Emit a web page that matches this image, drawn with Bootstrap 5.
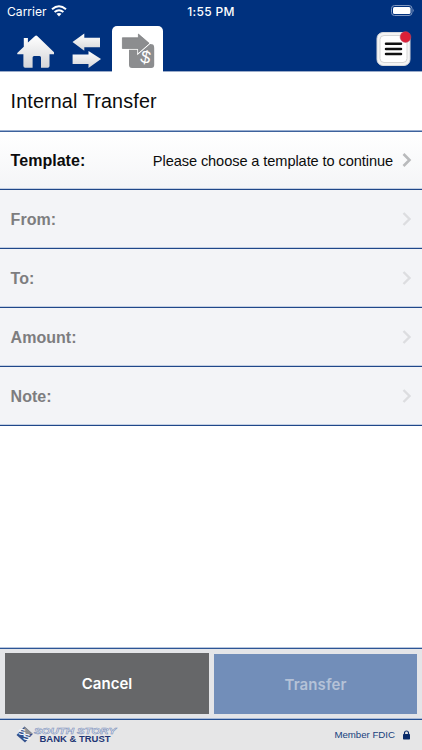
<!DOCTYPE html>
<html lang="en">
<head>
<meta charset="utf-8">
<meta name="viewport" content="width=device-width, initial-scale=1">
<title>Internal Transfer</title>
<link href="https://cdn.jsdelivr.net/npm/bootstrap@5.3.0/dist/css/bootstrap.min.css" rel="stylesheet">
<style>
body{font-family:"Liberation Sans",Arial,sans-serif;color:#0c0c0c;height:750px;line-height:1.2}
svg{display:block;flex:none}
.top-bar{background:linear-gradient(#00317e 71px,#9aabc9 71px);height:72px}
.status{height:22px;font:400 12.1px/22px Inter,sans-serif;padding:1px 7px 0;color:#fff}
.status>div{flex:1 1 0}
.status .clock{font-weight:500;font-size:12px;letter-spacing:.3px;flex:none}
.tools{height:50px;padding:4px 11px 0 16px}
.tab-on{width:51px;height:46px;background:#fff;border-radius:5px 5px 0 0;margin-left:11px;padding:6px 0 0 9px}
.screen-title{height:60px;font-size:19.7px;letter-spacing:.17px;padding:0 10.5px;margin:0;font-weight:400;border-bottom:1px solid #3d629c;box-shadow:inset 0 -1px #9aafd0}
.field{height:59px;border:0;border-bottom:1px solid #1f4789!important;box-shadow:inset 0 -1px #c3cfe3;border-radius:0!important;background:#f3f4f7;color:#7d7d7f;padding:1px 10px 0 10.6px}
.field:first-child{background:linear-gradient(#fff,#f4f5f7);color:#0c0c0c;height:58px}
.field b{font-size:16px;letter-spacing:.03px}
.field .hint{font-size:14.6px;letter-spacing:-.09px;padding-top:1px;margin-right:9px}
.field svg{margin-top:-2px}
.actions{height:71px;background:#e4e5e8;border-top:1px solid #2c5595;box-shadow:0 -1px #b9c7de;padding:4px 5px 5px;gap:5px}
.actions .btn{border-radius:0;border:0;font:600 15px Inter,sans-serif;padding:0;color:#fff;opacity:1}
.btn-stop{background:#666769!important;flex:0 0 204px}
.btn-send{background:#728eb9!important;color:#b5c2d7!important;margin-top:1px;flex:0 0 203px}
.actions .btn-send{letter-spacing:.1px}
.foot{height:31px;background:#e6e6e7;border-top:1px solid #234e91;box-shadow:0 -1px #a9bad7;padding:0 12px 1px 16px;color:#173f7d;font-size:10px}
.foot span{letter-spacing:-.02px;font:9.7px "Liberation Sans",sans-serif}
</style>
<script src="https://cdn.jsdelivr.net/npm/bootstrap@5.3.0/dist/js/bootstrap.bundle.min.js"></script>
</head>
<body class="d-flex flex-column overflow-hidden bg-white">
<header class="top-bar flex-shrink-0">
  <div class="status d-flex">
    <div class="d-flex align-items-center gap-1">Carrier
      <svg width="16" height="12" viewBox="0 0 16 12" fill="none" stroke="#fff" stroke-width="2" style="margin-top:-2px"><path d="M1 4.3Q8-1.8 15 4.3M3.6 7Q8 3.4 12.4 7"/><path d="M5.5 8.8Q8 7 10.5 8.8L8 11.5z" fill="#fff" stroke="none"/></svg>
    </div>
    <div class="clock">1:55 PM</div>
    <div class="d-flex justify-content-end align-items-center">
      <svg width="24" height="11" viewBox="0 0 24 11" style="margin-top:-2px"><rect x=".5" y=".5" width="20.5" height="10" rx="3" fill="none" stroke="#8299c1"/><rect x="2" y="2" width="17.5" height="7" rx="1.5" fill="#fff"/><path d="M22.2 3.8q1.5 1.7 0 3.4z" fill="#8299c1"/></svg>
    </div>
  </div>
  <div class="tools d-flex align-items-start">
    <svg class="mt-2" width="38" height="35" viewBox="0 0 38 35"><defs><linearGradient id="silver" x2="0" y2="1"><stop stop-color="#fff"/><stop offset="1" stop-color="#d4d5d8"/></linearGradient></defs><path d="M7.8 4h4.1v4.6l6.9-6.4q1.3-1.2 2.7 0l17 16.6q.9 1.4-.7 1.5h-4.3V32q0 1.7-1.7 1.7H25V23.5q0-1.5-1.5-1.5h-5.4q-1.5 0-1.5 1.5v10.2H9.1q-1.7 0-1.7-1.7V20.3H2.2q-1.6-.1-.7-1.5l6.3-6z" fill="url(#silver)"/></svg>
    <svg width="29" height="36" viewBox="0 0 29 36" style="margin:7px 0 0 18px"><g fill="url(#silver)"><path d="M.5 9 12.3.5v4.3H28v9.5H12.3v3.5z"/><path d="M29 26 16.5 35v-4H.6v-9.5h15.9V18z"/></g></svg>
    <div class="tab-on">
      <svg width="34" height="37" viewBox="0 0 34 37"><path d="M8 17h8l11-5.2q5 .2 5.5 1.2.7 1 .7 3V33q0 3-3 3H11q-3 0-3-3z" fill="#8c8d8f"/><path d="M1.4 5.7h16V2l10.7 9.2-10.7 9.3v-4h-16z" fill="none" stroke="#fff" stroke-width="2.4"/><path d="M1.4 5.7h16V2l10.7 9.2-10.7 9.3v-4h-16z" fill="#8c8d8f" stroke="#6f7072" stroke-width=".6"/><text x="19.7" y="31.3" font-family="Liberation Sans" font-size="18" fill="#fff" transform="rotate(12 25 25)">$</text></svg>
    </div>
    <svg class="ms-auto" style="margin-top:3px;margin-right:-1px" width="37" height="38" viewBox="0 0 37 38"><rect x="2" y="3.5" width="33" height="33" rx="6" fill="#f4f4f4" stroke="#d6d8dc"/><rect x="5" y="6.5" width="27" height="27" rx="4" fill="#fff" stroke="#d5d5d5"/><path d="M11 14.7h15M11 19.9h15M11 25.1h15" stroke="#111" stroke-width="2.5" stroke-linecap="round"/><circle cx="30.5" cy="8" r="5.4" fill="#dc2037" stroke="#b8455f" stroke-width=".5"/></svg>
  </div>
</header>
<h1 class="screen-title d-flex align-items-center flex-shrink-0">Internal Transfer</h1>
<main class="list-group list-group-flush flex-grow-1">
  <div class="list-group-item field d-flex align-items-center"><b>Template:</b><span class="hint ms-auto">Please choose a template to continue</span><svg width="10" height="14" viewBox="0 0 10 14"><path d="m1.5 1 6 6-6 6" fill="none" stroke="#b9babc" stroke-width="2.6"/></svg></div>
  <div class="list-group-item field d-flex align-items-center justify-content-between"><b>From:</b><svg width="10" height="14" viewBox="0 0 10 14"><path d="m1.5 1 6 6-6 6" fill="none" stroke="#dcdde0" stroke-width="2.4"/></svg></div>
  <div class="list-group-item field d-flex align-items-center justify-content-between"><b>To:</b><svg width="10" height="14" viewBox="0 0 10 14"><path d="m1.5 1 6 6-6 6" fill="none" stroke="#dcdde0" stroke-width="2.4"/></svg></div>
  <div class="list-group-item field d-flex align-items-center justify-content-between"><b>Amount:</b><svg width="10" height="14" viewBox="0 0 10 14"><path d="m1.5 1 6 6-6 6" fill="none" stroke="#dcdde0" stroke-width="2.4"/></svg></div>
  <div class="list-group-item field d-flex align-items-center justify-content-between"><b>Note:</b><svg width="10" height="14" viewBox="0 0 10 14"><path d="m1.5 1 6 6-6 6" fill="none" stroke="#dcdde0" stroke-width="2.4"/></svg></div>
</main>
<div class="actions d-flex flex-shrink-0">
  <button class="btn btn-stop" type="button">Cancel</button>
  <button class="btn btn-send" type="button" disabled>Transfer</button>
</div>
<footer class="foot d-flex align-items-center justify-content-between flex-shrink-0">
  <svg width="102" height="20" viewBox="0 0 102 20">
    <path d="M8.5 1.5 16.8 9 9 17.5.5 10z" fill="#33508c"/><path d="M8.5 1.5 16.8 9H8z" fill="#8e9094"/>
    <g font-family="Liberation Sans" font-weight="700" font-size="9.5" fill="#f4f6fa"><text x="2" y="10" textLength="8" lengthAdjust="spacingAndGlyphs">S</text><text x="6.8" y="15.2" textLength="8" lengthAdjust="spacingAndGlyphs">S</text></g>
    <text x="18" y="8.6" textLength="82" lengthAdjust="spacingAndGlyphs" font-family="Liberation Sans" font-style="italic" font-weight="700" font-size="9.4" fill="#edf0f6" stroke="#7c8fb9" stroke-width=".55">SOUTH STORY</text>
    <text x="23.5" y="17" textLength="71" lengthAdjust="spacingAndGlyphs" font-family="Liberation Sans" font-weight="700" font-size="8.2" fill="#1f3675">BANK &amp; TRUST</text>
  </svg>
  <div class="d-flex align-items-center gap-2"><span>Member FDIC</span>
    <svg width="7" height="10" viewBox="0 0 7 10"><rect y="4" width="7" height="5.5" rx=".7" fill="#092a69"/><path d="M1.5 5V3a2 2 0 0 1 4 0v2" fill="none" stroke="#092a69" stroke-width="1.2"/></svg>
  </div>
</footer>
</body>
</html>
